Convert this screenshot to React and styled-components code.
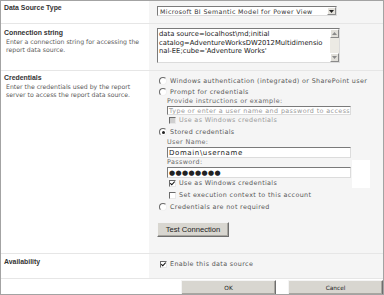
import React from "react"
import styled, { createGlobalStyle } from "styled-components"

const GlobalStyle = createGlobalStyle`
	html, body {
		margin: 0;
		padding: 0;
		background: #ffffff;
	}
`

const Frame = styled.div`
	width: 384px;
	height: 295px;
	box-sizing: border-box;
	border: 1px solid #a3a3a3;
	background: #ffffff;
	display: flex;
	flex-direction: column;
	font-family: "DejaVu Sans", Verdana, sans-serif;
	color: #555555;
	overflow: hidden;
`

const Row = styled.div`
	display: grid;
	grid-template-columns: 148px 1fr;
	height: ${(p) => p.$h}px;
	border-bottom: 1px solid #e6e6e6;
	flex-shrink: 0;
`

const LabelCell = styled.div`
	padding: ${(p) => p.$top || 3}px 3px 0 3px;
	background: #ffffff;
`

const Title = styled.div`
	font-family: "Liberation Sans", Arial, sans-serif;
	font-weight: bold;
	font-size: 6.9px;
	line-height: 9px;
	color: #333333;
`

const Desc = styled.div`
	font-family: "DejaVu Sans", sans-serif;
	font-size: 6.2px;
	line-height: 7.5px;
	color: #5a5a5a;
	padding-left: 2px;
	margin-top: 1px;
`

const FieldCell = styled.div`
	background: #f5f5f5;
	padding: ${(p) => p.$top || 0}px 0 0 8px;
	display: flex;
	flex-direction: column;
	align-items: flex-start;
`

const SelectBox = styled.div`
	width: 180px;
	height: 10px;
	box-sizing: border-box;
	background: #ffffff;
	border: 1px solid;
	border-color: #7a7a7a #dcdcdc #dcdcdc #7a7a7a;
	display: flex;
	align-items: center;
	font-size: 6.3px;
	letter-spacing: 0.35px;
	color: #333333;
	padding-left: 2px;
`

const SelectText = styled.span`
	flex: 1;
	white-space: nowrap;
	overflow: hidden;
`

const ArrowBtn = styled.span`
	width: 9px;
	height: 8px;
	box-sizing: border-box;
	background: #e4e2dc;
	border: 1px solid;
	border-color: #ffffff #8a8a8a #8a8a8a #ffffff;
	display: flex;
	align-items: center;
	justify-content: center;
`

const TextBox = styled.div`
	width: 183px;
	height: 35px;
	box-sizing: border-box;
	background: #ffffff;
	border: 1px solid;
	border-color: #7a7a7a #dcdcdc #dcdcdc #7a7a7a;
	display: flex;
`

const TextContent = styled.div`
	flex: 1;
	font-family: "DejaVu Sans", sans-serif;
	font-size: 6.8px;
	line-height: 8.7px;
	color: #222222;
	padding: 1px 0 0 1px;
	white-space: nowrap;
	overflow: hidden;
`

const ScrollBar = styled.div`
	width: 9px;
	background: #eceae4;
	display: flex;
	flex-direction: column;
	justify-content: space-between;
`

const ScrollBtn = styled.span`
	height: 9px;
	box-sizing: border-box;
	background: #e2e0da;
	border: 1px solid;
	border-color: #ffffff #8a8a8a #8a8a8a #ffffff;
	display: flex;
	align-items: center;
	justify-content: center;
`

const Option = styled.div`
	display: flex;
	align-items: center;
	gap: 3px;
	height: ${(p) => p.$h || 11}px;
	margin-left: ${(p) => p.$indent || 0}px;
	margin-top: ${(p) => p.$mt || 0}px;
	font-size: 6.4px;
	letter-spacing: 0.35px;
	color: ${(p) => (p.$muted ? "#9a9a9a" : "#585858")};
	white-space: nowrap;
`

const Radio = styled.span`
	width: 6px;
	height: 6px;
	border-radius: 50%;
	border: 1px solid;
	border-color: #6a6a6a #f0f0f0 #f0f0f0 #6a6a6a;
	background: #ffffff;
	display: flex;
	align-items: center;
	justify-content: center;
	flex-shrink: 0;
	margin-left: 2px;

	&::after {
		content: "";
		display: ${(p) => (p.$checked ? "block" : "none")};
		width: 3px;
		height: 3px;
		border-radius: 50%;
		background: #222222;
	}
`

const Box = styled.span`
	width: 7px;
	height: 7px;
	box-sizing: border-box;
	border: 1px solid;
	border-color: #6a6a6a #e8e8e8 #e8e8e8 #6a6a6a;
	background: ${(p) => (p.$disabled ? "#cfcfcf" : "#ffffff")};
	display: flex;
	align-items: center;
	justify-content: center;
	flex-shrink: 0;
`

const SubLabel = styled.div`
	font-size: 6.4px;
	letter-spacing: 0.38px;
	line-height: 9px;
	color: #6a6a6a;
	margin-left: 10px;
	height: 9px;
`

const Input = styled.div`
	width: 184px;
	height: ${(p) => p.$h || 11}px;
	box-sizing: border-box;
	background: #ffffff;
	border: 1px solid;
	border-color: #7a7a7a #dcdcdc #dcdcdc #7a7a7a;
	margin-left: 10px;
	display: flex;
	align-items: center;
	padding-left: 1px;
	font-size: ${(p) => (p.$placeholder ? 6.4 : 7)}px;
	letter-spacing: ${(p) => (p.$placeholder ? 0.38 : p.$dots ? 0.4 : 0.62)}px;
	color: ${(p) => (p.$placeholder ? "#9a9a9a" : "#222222")};
	white-space: nowrap;
	overflow: hidden;
`

const InputLine = styled.div`
	display: flex;
	align-items: flex-start;
`

const Blank = styled.div`
	width: 18px;
	height: 28px;
	margin: -7px 0 -10px 1px;
	background: #ffffff;
`

const ClassicButton = styled.button`
	box-sizing: border-box;
	height: 15px;
	width: ${(p) => p.$w}px;
	margin: ${(p) => p.$m || 0};
	padding: 0;
	background: #d8d6d0;
	border: 1px solid;
	border-color: #f4f4f4 #6e6e6e #6e6e6e #f4f4f4;
	box-shadow: inset -1px -1px 0 #a8a6a0;
	font-family: ${(p) => (p.$big ? `"Liberation Sans", Arial, sans-serif` : `"DejaVu Sans", sans-serif`)};
	font-size: ${(p) => (p.$big ? 7.6 : 5.8)}px;
	color: #222222;
	cursor: pointer;
`

const Footer = styled.div`
	flex: 1;
	display: flex;
	justify-content: flex-end;
	align-items: flex-start;
	gap: 12px;
	padding: 1px 0 0 0;
`

const Check = () => (
	<svg width="5" height="5" viewBox="0 0 5 5">
		<path d="M0.3 2.2 L1.8 3.8 L4.7 0.6" fill="none" stroke="#111" strokeWidth="1.1" />
	</svg>
)

const Down = () => (
	<svg width="5" height="3" viewBox="0 0 5 3">
		<path d="M0 0 H5 L2.5 3 Z" fill="#222" />
	</svg>
)

const Up = () => (
	<svg width="5" height="3" viewBox="0 0 5 3">
		<path d="M0 3 H5 L2.5 0 Z" fill="#8a8a8a" />
	</svg>
)

const DownGrey = () => (
	<svg width="5" height="3" viewBox="0 0 5 3">
		<path d="M0 0 H5 L2.5 3 Z" fill="#8a8a8a" />
	</svg>
)

function App() {
	return (
		<>
			<GlobalStyle />
			<Frame>
				<Row $h={22}>
					<LabelCell $top={2}>
						<Title>Data Source Type</Title>
					</LabelCell>
					<FieldCell $top={5}>
						<SelectBox>
							<SelectText>Microsoft BI Semantic Model for Power View</SelectText>
							<ArrowBtn>
								<Down />
							</ArrowBtn>
						</SelectBox>
					</FieldCell>
				</Row>

				<Row $h={46}>
					<LabelCell $top={4}>
						<Title>Connection string</Title>
						<Desc>
							Enter a connection string for accessing the
							<br />
							report data source.
						</Desc>
					</LabelCell>
					<FieldCell $top={4}>
						<TextBox>
							<TextContent>
								data source=localhost\md;initial
								<br />
								catalog=AdventureWorksDW2012Multidimensio
								<br />
								nal-EE;cube='Adventure Works'
							</TextContent>
							<ScrollBar>
								<ScrollBtn>
									<Up />
								</ScrollBtn>
								<ScrollBtn>
									<DownGrey />
								</ScrollBtn>
							</ScrollBar>
						</TextBox>
					</FieldCell>
				</Row>

				<Row $h={182}>
					<LabelCell $top={2}>
						<Title>Credentials</Title>
						<Desc>
							Enter the credentials used by the report
							<br />
							server to access the report data source.
						</Desc>
					</LabelCell>
					<FieldCell $top={4}>
						<Option>
							<Radio />
							Windows authentication (integrated) or SharePoint user
						</Option>
						<Option>
							<Radio />
							Prompt for credentials
						</Option>
						<SubLabel>Provide instructions or example:</SubLabel>
						<Input $h={9} $placeholder>
							Type or enter a user name and password to access
						</Input>
						<Option $indent={12} $h={10} $muted>
							<Box $disabled />
							Use as Windows credentials
						</Option>
						<Option $h={12} $mt={1}>
							<Radio $checked />
							Stored credentials
						</Option>
						<SubLabel>User Name:</SubLabel>
						<Input>Domain\username</Input>
						<SubLabel>Password:</SubLabel>
						<InputLine>
							<Input $dots>●●●●●●●●</Input>
							<Blank />
						</InputLine>
						<Option $indent={12} $h={10}>
							<Box>
								<Check />
							</Box>
							Use as Windows credentials
						</Option>
						<Option $indent={12} $h={12} $mt={1}>
							<Box />
							Set execution context to this account
						</Option>
						<Option $h={12}>
							<Radio />
							Credentials are not required
						</Option>
						<ClassicButton $w={72} $m="9px 0 0 0" $big>
							Test Connection
						</ClassicButton>
					</FieldCell>
				</Row>

				<Row $h={24}>
					<LabelCell $top={3}>
						<Title>Availability</Title>
					</LabelCell>
					<FieldCell $top={5}>
						<Option $h={10} $indent={3}>
							<Box>
								<Check />
							</Box>
							Enable this data source
						</Option>
					</FieldCell>
				</Row>

				<Footer>
					<ClassicButton $w={95}>OK</ClassicButton>
					<ClassicButton $w={95}>Cancel</ClassicButton>
				</Footer>
			</Frame>
		</>
	)
}

export default App
